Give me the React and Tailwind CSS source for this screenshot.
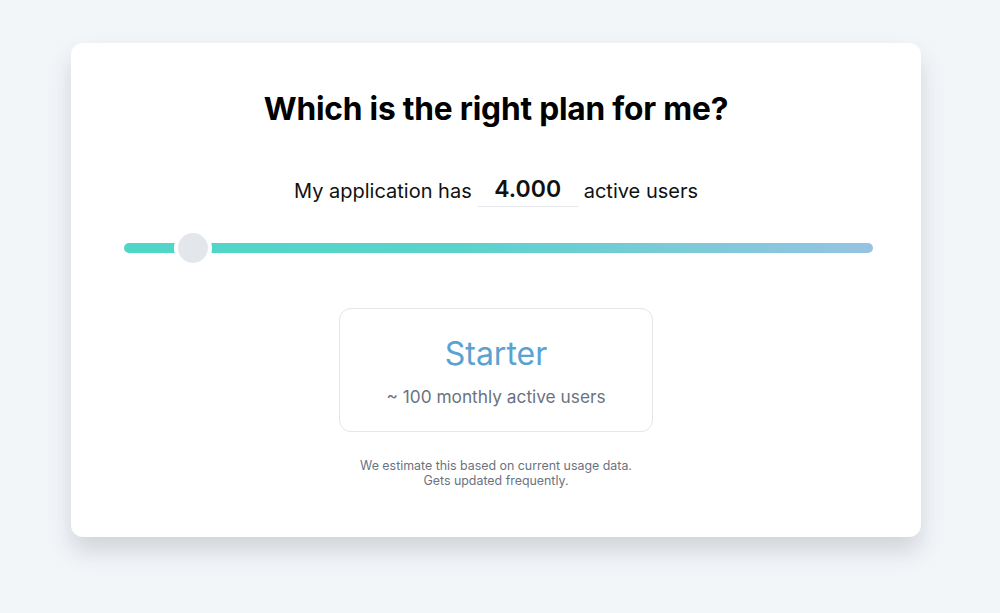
import React from "react";

export default function App() {
  const pct = 9.2;
  return (
    <div className="min-h-[613px] w-full bg-[#f3f6f9] pt-[43px]" style={{ fontFamily: "Inter, 'Noto Sans', sans-serif" }}>
      <div className="ml-[71px] h-[494px] w-[850px] rounded-[12px] bg-white shadow-[0_14px_24px_rgba(30,40,60,0.16)] flex flex-col items-center">
        <h1 className="mt-[46px] text-[31.7px] leading-[40px] font-bold text-black tracking-[-0.2px]">Which is the right plan for me?</h1>
        <div className="mt-[45px] flex items-center text-[20px] text-[#111] leading-[28px]">
          <span>My application has</span>
          <div className="mx-[6px] w-[100px] border-b border-[#e5e7eb] text-center text-[23px] font-semibold leading-[30px] pb-[2px]">4.000</div>
          <span>active users</span>
        </div>
        <div className="mt-[26px] ml-[5px] relative w-[749px] h-[30px] flex items-center">
          <div className="h-[10px] w-full rounded-full bg-[linear-gradient(to_right,#4fd6c8_0%,#5ad3cc_45%,#97c3e2_100%)]" />
          <div
            className="absolute top-0 h-[30px] w-[30px] -translate-x-1/2 rounded-full bg-[#e3e6eb] ring-[4px] ring-white"
            style={{ left: `${pct}%` }}
          />
        </div>
        <div className="mt-[45px] flex h-[124px] w-[314px] flex-col items-center rounded-[12px] border border-[#e3e6ea]">
          <div className="mt-[25px] text-[32px] leading-[40px] text-[#5aa2d0]">Starter</div>
          <div className="mt-[11px] text-[17.3px] leading-[24px] text-[#6b7280]">~ 100 monthly active users</div>
        </div>
        <div className="mt-[26px] text-center text-[12.4px] leading-[15px] text-[#6b7280]">
          <p>We estimate this based on current usage data.</p>
          <p>Gets updated frequently.</p>
        </div>
      </div>
    </div>
  );
}
